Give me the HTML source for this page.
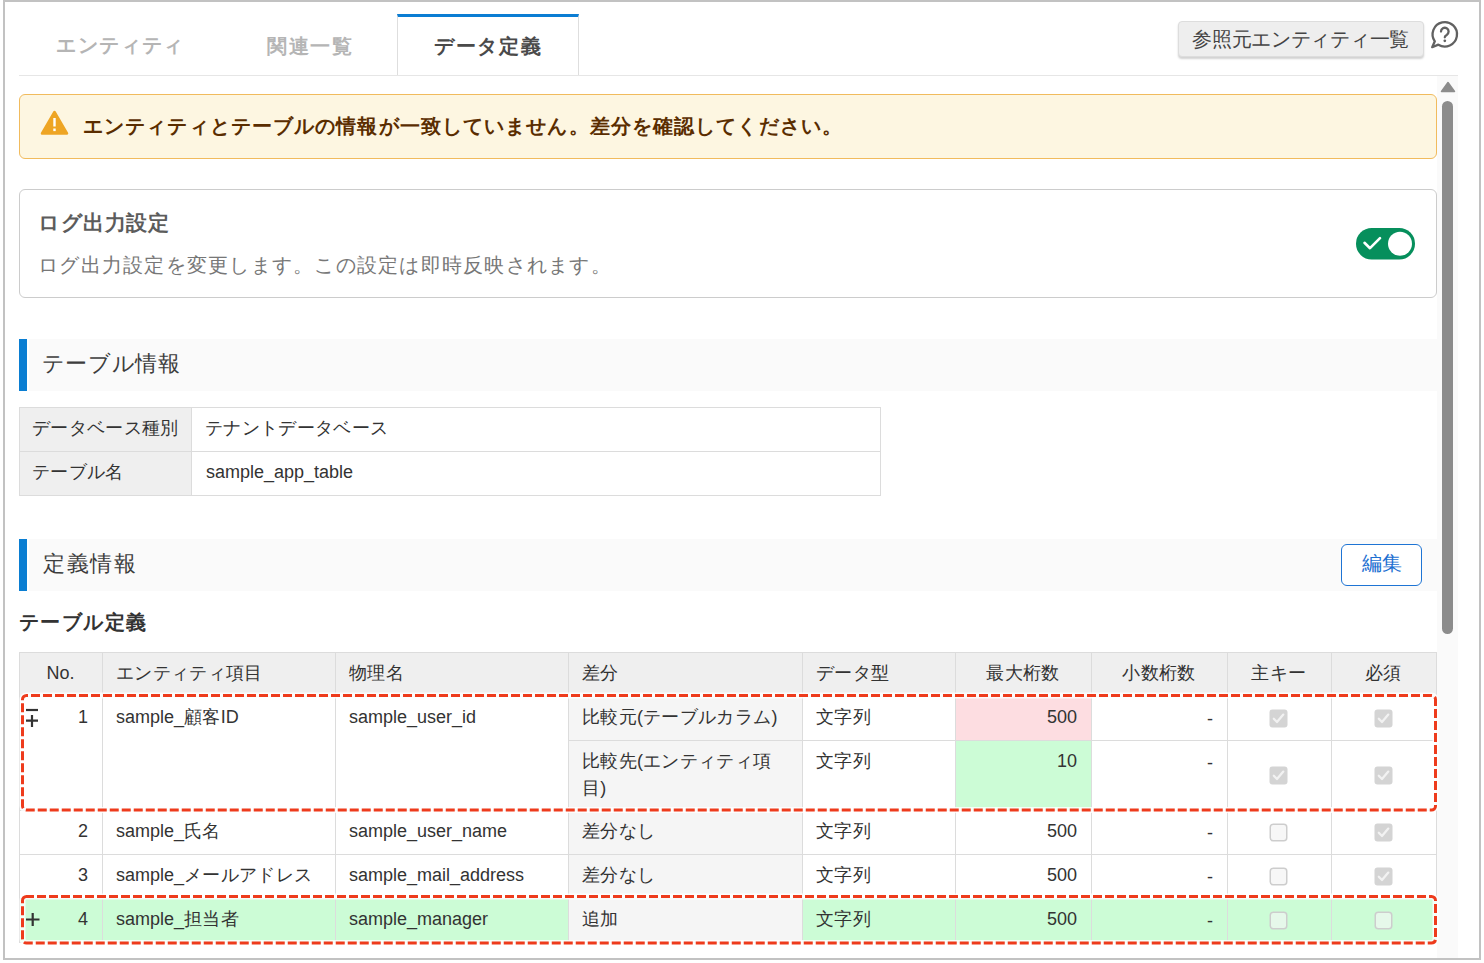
<!DOCTYPE html><html><head><meta charset="utf-8"><style>
*{margin:0;padding:0;box-sizing:border-box}
html,body{width:1484px;height:963px;overflow:hidden;background:#fff}
body{position:relative;font-family:"Liberation Sans",sans-serif;color:#333}
.t18{font-size:18px;line-height:27px;color:#333}
.j{letter-spacing:0.35px}
</style></head><body><div style="position:absolute;left:3px;top:0px;width:1478px;height:960px;border:2px solid #c2c2c2;"></div>
<div style="position:absolute;left:19px;top:75px;width:1439px;height:1px;background:#e6e6e6;"></div>
<div style="position:absolute;left:397px;top:14px;width:182px;height:61px;background:#fff;border-left:1px solid #dedede;border-right:1px solid #dedede;border-top:3px solid #0b7dd3;"></div>
<div style="position:absolute;left:56.4px;top:29.6px;white-space:nowrap;font-size:20px;letter-spacing:1.4px;line-height:30px;font-weight:bold;color:#b5b5b5;">エンティティ</div>
<div style="position:absolute;left:267px;top:31.1px;white-space:nowrap;font-size:20px;letter-spacing:1.67px;line-height:30px;font-weight:bold;color:#b5b5b5;">関連一覧</div>
<div style="position:absolute;left:433.8px;top:31.1px;white-space:nowrap;font-size:20px;letter-spacing:1.8px;line-height:30px;font-weight:bold;color:#4a4a4a;">データ定義</div>
<div style="position:absolute;left:1178px;top:21px;width:246px;height:36px;background:#eeeeee;border:1px solid #dddddd;border-radius:4px;box-shadow:0 2px 2px rgba(0,0,0,0.18);"></div>
<div style="position:absolute;left:1192.2px;top:23.7px;white-space:nowrap;font-size:20px;letter-spacing:-0.29px;line-height:30px;color:#444;">参照元エンティティ一覧</div>
<svg style="position:absolute;left:1426px;top:16px" width="38" height="36" viewBox="0 0 38 36">
<path d="M12.34 28.65 A12.2 12.2 0 1 0 8.81 25.3 L6.2 31.2 Z" fill="none" stroke="#616161" stroke-width="2.3" stroke-linejoin="round"/>
<path d="M15 15.6 a3.8 3.8 0 1 1 5.7 3.3 c-1.3 .7 -1.9 1.3 -1.9 2.4" fill="none" stroke="#616161" stroke-width="2.3" stroke-linecap="round"/>
<circle cx="18.8" cy="24.8" r="1.35" fill="#616161"/>
</svg>
<div style="position:absolute;left:1437px;top:76px;width:21px;height:882px;background:#fafafa;"></div>
<svg style="position:absolute;left:1440px;top:81px" width="16" height="12" viewBox="0 0 16 12"><path d="M8 1.5 L14.5 10.5 L1.5 10.5 Z" fill="#8c8c8c" stroke="#8c8c8c" stroke-width="1.5" stroke-linejoin="round"/></svg>
<div style="position:absolute;left:1442px;top:101px;width:11px;height:533px;background:#8c8c8c;border-radius:6px;"></div>
<div style="position:absolute;left:19px;top:94px;width:1418px;height:65px;background:#fdf6e1;border:1px solid #f1bb5d;border-radius:6px;"></div>
<svg style="position:absolute;left:40px;top:110px" width="29" height="26" viewBox="0 0 29 26">
<path d="M14.5 2 L27 23.5 L2 23.5 Z" fill="#eea524" stroke="#eea524" stroke-width="2.5" stroke-linejoin="round"/>
<rect x="13.3" y="8" width="2.4" height="8.5" fill="#fff"/>
<rect x="13.3" y="18.5" width="2.4" height="2.6" fill="#fff"/>
</svg>
<div style="position:absolute;left:83px;top:111px;white-space:nowrap;font-size:20px;letter-spacing:1.11px;line-height:30px;font-weight:bold;color:#5a2d00;">エンティティとテーブルの情報が一致していません。差分を確認してください。</div>
<div style="position:absolute;left:19px;top:189px;width:1418px;height:109px;border:1px solid #cccccc;border-radius:6px;background:#fff;"></div>
<div style="position:absolute;left:38.3px;top:207.7px;white-space:nowrap;font-size:21px;letter-spacing:0.46px;line-height:30px;font-weight:bold;color:#5c5c5c;">ログ出力設定</div>
<div style="position:absolute;left:38px;top:250.4px;white-space:nowrap;font-size:20px;letter-spacing:1.25px;line-height:30px;color:#777;">ログ出力設定を変更します。この設定は即時反映されます。</div>
<svg style="position:absolute;left:1355px;top:227px" width="62" height="34" viewBox="0 0 62 34">
<rect x="1" y="1" width="59" height="31.5" rx="15.75" fill="#068f5c"/>
<circle cx="45" cy="16.75" r="12" fill="#fff"/>
<path d="M9.5 15.8 L15 21.2 L25 11.2" fill="none" stroke="#fff" stroke-width="2.6" stroke-linecap="round" stroke-linejoin="round"/>
</svg>
<div style="position:absolute;left:29px;top:339px;width:1408px;height:52px;background:#fafafa;"></div>
<div style="position:absolute;left:19px;top:339px;width:8px;height:52px;background:#0a7ed2;"></div>
<div style="position:absolute;left:41.6px;top:348.7px;white-space:nowrap;font-size:22px;letter-spacing:0.68px;line-height:30px;color:#3d3d3d;">テーブル情報</div>
<div style="position:absolute;left:19px;top:407px;width:862px;height:89px;border:1px solid #dcdcdc;"></div>
<div style="position:absolute;left:20px;top:408px;width:171px;height:87px;background:#efefef;"></div>
<div style="position:absolute;left:191px;top:408px;width:1px;height:87px;background:#dcdcdc;"></div>
<div style="position:absolute;left:20px;top:451px;width:860px;height:1px;background:#dcdcdc;"></div>
<div class="t18" style="position:absolute;left:32px;top:415px;white-space:nowrap;"><span class="j">データベース種別</span></div>
<div class="t18" style="position:absolute;left:205px;top:415px;white-space:nowrap;"><span class="j">テナントデータベース</span></div>
<div class="t18" style="position:absolute;left:32px;top:459px;white-space:nowrap;"><span class="j">テーブル名</span></div>
<div class="t18" style="position:absolute;left:206px;top:459px;white-space:nowrap;">sample_app_table</div>
<div style="position:absolute;left:29px;top:539px;width:1408px;height:52px;background:#fafafa;"></div>
<div style="position:absolute;left:19px;top:539px;width:8px;height:52px;background:#0a7ed2;"></div>
<div style="position:absolute;left:43.4px;top:548.7px;white-space:nowrap;font-size:22px;letter-spacing:1.37px;line-height:30px;color:#3d3d3d;">定義情報</div>
<div style="position:absolute;left:1341px;top:544px;width:81px;height:42px;background:#fff;border:1px solid #1e74d4;border-radius:6px;"></div>
<div style="position:absolute;left:1362px;top:548.3px;white-space:nowrap;font-size:20px;line-height:30px;color:#1c6fd1;">編集</div>
<div style="position:absolute;left:18.7px;top:606.8px;white-space:nowrap;font-size:20px;letter-spacing:1.46px;line-height:30px;font-weight:bold;color:#333;">テーブル定義</div>
<div style="position:absolute;left:19px;top:653px;width:1418px;height:43px;background:#efefef;"></div>
<div style="position:absolute;left:568px;top:697px;width:234px;height:245px;background:#f5f5f5;"></div>
<div style="position:absolute;left:955px;top:697px;width:136px;height:43px;background:#fddde1;"></div>
<div style="position:absolute;left:955px;top:741px;width:136px;height:69px;background:#ccfcd6;"></div>
<div style="position:absolute;left:19px;top:899px;width:549px;height:43px;background:#ccfcd6;"></div>
<div style="position:absolute;left:802px;top:899px;width:635px;height:43px;background:#ccfcd6;"></div>
<div style="position:absolute;left:19px;top:652px;width:1418px;height:1px;background:#dcdcdc;"></div>
<div style="position:absolute;left:19px;top:696px;width:1418px;height:1px;background:#dcdcdc;"></div>
<div style="position:absolute;left:568px;top:740px;width:869px;height:1px;background:#dcdcdc;"></div>
<div style="position:absolute;left:19px;top:854px;width:1418px;height:1px;background:#dcdcdc;"></div>
<div style="position:absolute;left:19px;top:810px;width:1418px;height:1px;background:#dcdcdc;"></div>
<div style="position:absolute;left:19px;top:898px;width:1418px;height:1px;background:#dcdcdc;"></div>
<div style="position:absolute;left:19px;top:942px;width:1418px;height:1px;background:#dcdcdc;"></div>
<div style="position:absolute;left:19px;top:652px;width:1px;height:291px;background:#dcdcdc;"></div>
<div style="position:absolute;left:102px;top:652px;width:1px;height:291px;background:#dcdcdc;"></div>
<div style="position:absolute;left:335px;top:652px;width:1px;height:291px;background:#dcdcdc;"></div>
<div style="position:absolute;left:568px;top:652px;width:1px;height:291px;background:#dcdcdc;"></div>
<div style="position:absolute;left:802px;top:652px;width:1px;height:291px;background:#dcdcdc;"></div>
<div style="position:absolute;left:955px;top:652px;width:1px;height:291px;background:#dcdcdc;"></div>
<div style="position:absolute;left:1091px;top:652px;width:1px;height:291px;background:#dcdcdc;"></div>
<div style="position:absolute;left:1227px;top:652px;width:1px;height:291px;background:#dcdcdc;"></div>
<div style="position:absolute;left:1331px;top:652px;width:1px;height:291px;background:#dcdcdc;"></div>
<div style="position:absolute;left:1436px;top:652px;width:1px;height:291px;background:#dcdcdc;"></div>
<div class="t18" style="position:absolute;left:19px;top:660px;width:83px;text-align:center;white-space:nowrap;">No.</div>
<div class="t18" style="position:absolute;left:116px;top:660px;white-space:nowrap;"><span class="j">エンティティ項目</span></div>
<div class="t18" style="position:absolute;left:349px;top:660px;white-space:nowrap;"><span class="j">物理名</span></div>
<div class="t18" style="position:absolute;left:582px;top:660px;white-space:nowrap;"><span class="j">差分</span></div>
<div class="t18" style="position:absolute;left:816px;top:660px;white-space:nowrap;"><span class="j">データ型</span></div>
<div class="t18" style="position:absolute;left:955px;top:660px;width:136px;text-align:center;white-space:nowrap;"><span class="j">最大桁数</span></div>
<div class="t18" style="position:absolute;left:1091px;top:660px;width:136px;text-align:center;white-space:nowrap;"><span class="j">小数桁数</span></div>
<div class="t18" style="position:absolute;left:1227px;top:660px;width:104px;text-align:center;white-space:nowrap;"><span class="j">主キー</span></div>
<div class="t18" style="position:absolute;left:1331px;top:660px;width:105px;text-align:center;white-space:nowrap;"><span class="j">必須</span></div>
<div class="t18" style="position:absolute;left:19px;top:704px;width:69px;text-align:right;white-space:nowrap;padding-right:0;">1</div>
<div class="t18" style="position:absolute;left:116px;top:704px;white-space:nowrap;">sample_<span class="j">顧客</span>ID</div>
<div class="t18" style="position:absolute;left:349px;top:704px;white-space:nowrap;">sample_user_id</div>
<div class="t18" style="position:absolute;left:582px;top:704px;white-space:nowrap;"><span class="j">比較元</span>(<span class="j">テーブルカラム</span>)</div>
<div class="t18" style="position:absolute;left:816px;top:704px;white-space:nowrap;"><span class="j">文字列</span></div>
<div class="t18" style="position:absolute;left:955px;top:704px;width:122px;text-align:right;white-space:nowrap;">500</div>
<div class="t18" style="position:absolute;left:1091px;top:706px;width:122px;text-align:right;white-space:nowrap;">-</div>
<div class="t18" style="position:absolute;left:582px;top:748px;white-space:nowrap;"><span class="j">比較先</span>(<span class="j">エンティティ項</span><br><span class="j">目</span>)</div>
<div class="t18" style="position:absolute;left:816px;top:748px;white-space:nowrap;"><span class="j">文字列</span></div>
<div class="t18" style="position:absolute;left:955px;top:748px;width:122px;text-align:right;white-space:nowrap;">10</div>
<div class="t18" style="position:absolute;left:1091px;top:750px;width:122px;text-align:right;white-space:nowrap;">-</div>
<div class="t18" style="position:absolute;left:19px;top:818px;width:69px;text-align:right;white-space:nowrap;padding-right:0;">2</div>
<div class="t18" style="position:absolute;left:116px;top:818px;white-space:nowrap;">sample_<span class="j">氏名</span></div>
<div class="t18" style="position:absolute;left:349px;top:818px;white-space:nowrap;">sample_user_name</div>
<div class="t18" style="position:absolute;left:582px;top:818px;white-space:nowrap;"><span class="j">差分なし</span></div>
<div class="t18" style="position:absolute;left:816px;top:818px;white-space:nowrap;"><span class="j">文字列</span></div>
<div class="t18" style="position:absolute;left:955px;top:818px;width:122px;text-align:right;white-space:nowrap;">500</div>
<div class="t18" style="position:absolute;left:1091px;top:820px;width:122px;text-align:right;white-space:nowrap;">-</div>
<div class="t18" style="position:absolute;left:19px;top:862px;width:69px;text-align:right;white-space:nowrap;padding-right:0;">3</div>
<div class="t18" style="position:absolute;left:116px;top:862px;white-space:nowrap;">sample_<span class="j">メールアドレス</span></div>
<div class="t18" style="position:absolute;left:349px;top:862px;white-space:nowrap;">sample_mail_address</div>
<div class="t18" style="position:absolute;left:582px;top:862px;white-space:nowrap;"><span class="j">差分なし</span></div>
<div class="t18" style="position:absolute;left:816px;top:862px;white-space:nowrap;"><span class="j">文字列</span></div>
<div class="t18" style="position:absolute;left:955px;top:862px;width:122px;text-align:right;white-space:nowrap;">500</div>
<div class="t18" style="position:absolute;left:1091px;top:864px;width:122px;text-align:right;white-space:nowrap;">-</div>
<div class="t18" style="position:absolute;left:19px;top:906px;width:69px;text-align:right;white-space:nowrap;padding-right:0;">4</div>
<div class="t18" style="position:absolute;left:116px;top:906px;white-space:nowrap;">sample_<span class="j">担当者</span></div>
<div class="t18" style="position:absolute;left:349px;top:906px;white-space:nowrap;">sample_manager</div>
<div class="t18" style="position:absolute;left:582px;top:906px;white-space:nowrap;"><span class="j">追加</span></div>
<div class="t18" style="position:absolute;left:816px;top:906px;white-space:nowrap;"><span class="j">文字列</span></div>
<div class="t18" style="position:absolute;left:955px;top:906px;width:122px;text-align:right;white-space:nowrap;">500</div>
<div class="t18" style="position:absolute;left:1091px;top:908px;width:122px;text-align:right;white-space:nowrap;">-</div>
<svg style="position:absolute;left:1269.0px;top:709.0px" width="19" height="19" viewBox="0 0 19 19"><rect x="0.5" y="0.5" width="18" height="18" rx="3" fill="#d4d4d4"/><path d="M4.8 9.8 L8 13 L14.3 5.6" fill="none" stroke="#f2f2f2" stroke-width="2.3" stroke-linecap="round" stroke-linejoin="round"/></svg>
<svg style="position:absolute;left:1373.5px;top:709.0px" width="19" height="19" viewBox="0 0 19 19"><rect x="0.5" y="0.5" width="18" height="18" rx="3" fill="#d4d4d4"/><path d="M4.8 9.8 L8 13 L14.3 5.6" fill="none" stroke="#f2f2f2" stroke-width="2.3" stroke-linecap="round" stroke-linejoin="round"/></svg>
<svg style="position:absolute;left:1269.0px;top:766.0px" width="19" height="19" viewBox="0 0 19 19"><rect x="0.5" y="0.5" width="18" height="18" rx="3" fill="#d4d4d4"/><path d="M4.8 9.8 L8 13 L14.3 5.6" fill="none" stroke="#f2f2f2" stroke-width="2.3" stroke-linecap="round" stroke-linejoin="round"/></svg>
<svg style="position:absolute;left:1373.5px;top:766.0px" width="19" height="19" viewBox="0 0 19 19"><rect x="0.5" y="0.5" width="18" height="18" rx="3" fill="#d4d4d4"/><path d="M4.8 9.8 L8 13 L14.3 5.6" fill="none" stroke="#f2f2f2" stroke-width="2.3" stroke-linecap="round" stroke-linejoin="round"/></svg>
<svg style="position:absolute;left:1269.0px;top:823.0px" width="19" height="19" viewBox="0 0 19 19"><rect x="1.25" y="1.25" width="16.5" height="16.5" rx="3" fill="#f7f7f7" stroke="#cdcdcd" stroke-width="1.5"/></svg>
<svg style="position:absolute;left:1373.5px;top:823.0px" width="19" height="19" viewBox="0 0 19 19"><rect x="0.5" y="0.5" width="18" height="18" rx="3" fill="#d4d4d4"/><path d="M4.8 9.8 L8 13 L14.3 5.6" fill="none" stroke="#f2f2f2" stroke-width="2.3" stroke-linecap="round" stroke-linejoin="round"/></svg>
<svg style="position:absolute;left:1269.0px;top:867.0px" width="19" height="19" viewBox="0 0 19 19"><rect x="1.25" y="1.25" width="16.5" height="16.5" rx="3" fill="#f7f7f7" stroke="#cdcdcd" stroke-width="1.5"/></svg>
<svg style="position:absolute;left:1373.5px;top:867.0px" width="19" height="19" viewBox="0 0 19 19"><rect x="0.5" y="0.5" width="18" height="18" rx="3" fill="#d4d4d4"/><path d="M4.8 9.8 L8 13 L14.3 5.6" fill="none" stroke="#f2f2f2" stroke-width="2.3" stroke-linecap="round" stroke-linejoin="round"/></svg>
<svg style="position:absolute;left:1269.0px;top:911.0px" width="19" height="19" viewBox="0 0 19 19"><rect x="1.25" y="1.25" width="16.5" height="16.5" rx="3" fill="#e6f8ea" stroke="#cdcdcd" stroke-width="1.5"/></svg>
<svg style="position:absolute;left:1373.5px;top:911.0px" width="19" height="19" viewBox="0 0 19 19"><rect x="1.25" y="1.25" width="16.5" height="16.5" rx="3" fill="#e6f8ea" stroke="#cdcdcd" stroke-width="1.5"/></svg>
<svg style="position:absolute;left:24px;top:706px" width="16" height="22" viewBox="0 0 16 22">
<path d="M2 4 H14" stroke="#333" stroke-width="2.2"/>
<path d="M2 14.6 H14 M8 9 V21" stroke="#333" stroke-width="2.2"/>
</svg>
<svg style="position:absolute;left:24px;top:911px" width="18" height="18" viewBox="0 0 18 18">
<path d="M2 8.5 H15.5 M8.7 2 V15" stroke="#333" stroke-width="2.2"/>
</svg>
<svg style="position:absolute;left:0;top:0" width="1484" height="963" viewBox="0 0 1484 963">
<g fill="none" stroke-linejoin="round">
<rect x="22.5" y="695.5" width="1413" height="114.5" rx="4" stroke="#fff" stroke-width="6" opacity="0.8"/>
<rect x="22.5" y="896.5" width="1413" height="46.5" rx="4" stroke="#fff" stroke-width="6" opacity="0.8"/>
<rect x="22.5" y="695.5" width="1413" height="114.5" rx="4" stroke="#ee3b1c" stroke-width="3" stroke-dasharray="9 3" stroke-dashoffset="7.5"/>
<rect x="22.5" y="896.5" width="1413" height="46.5" rx="4" stroke="#ee3b1c" stroke-width="3" stroke-dasharray="9 3" stroke-dashoffset="1.5"/>
</g></svg></body></html>
